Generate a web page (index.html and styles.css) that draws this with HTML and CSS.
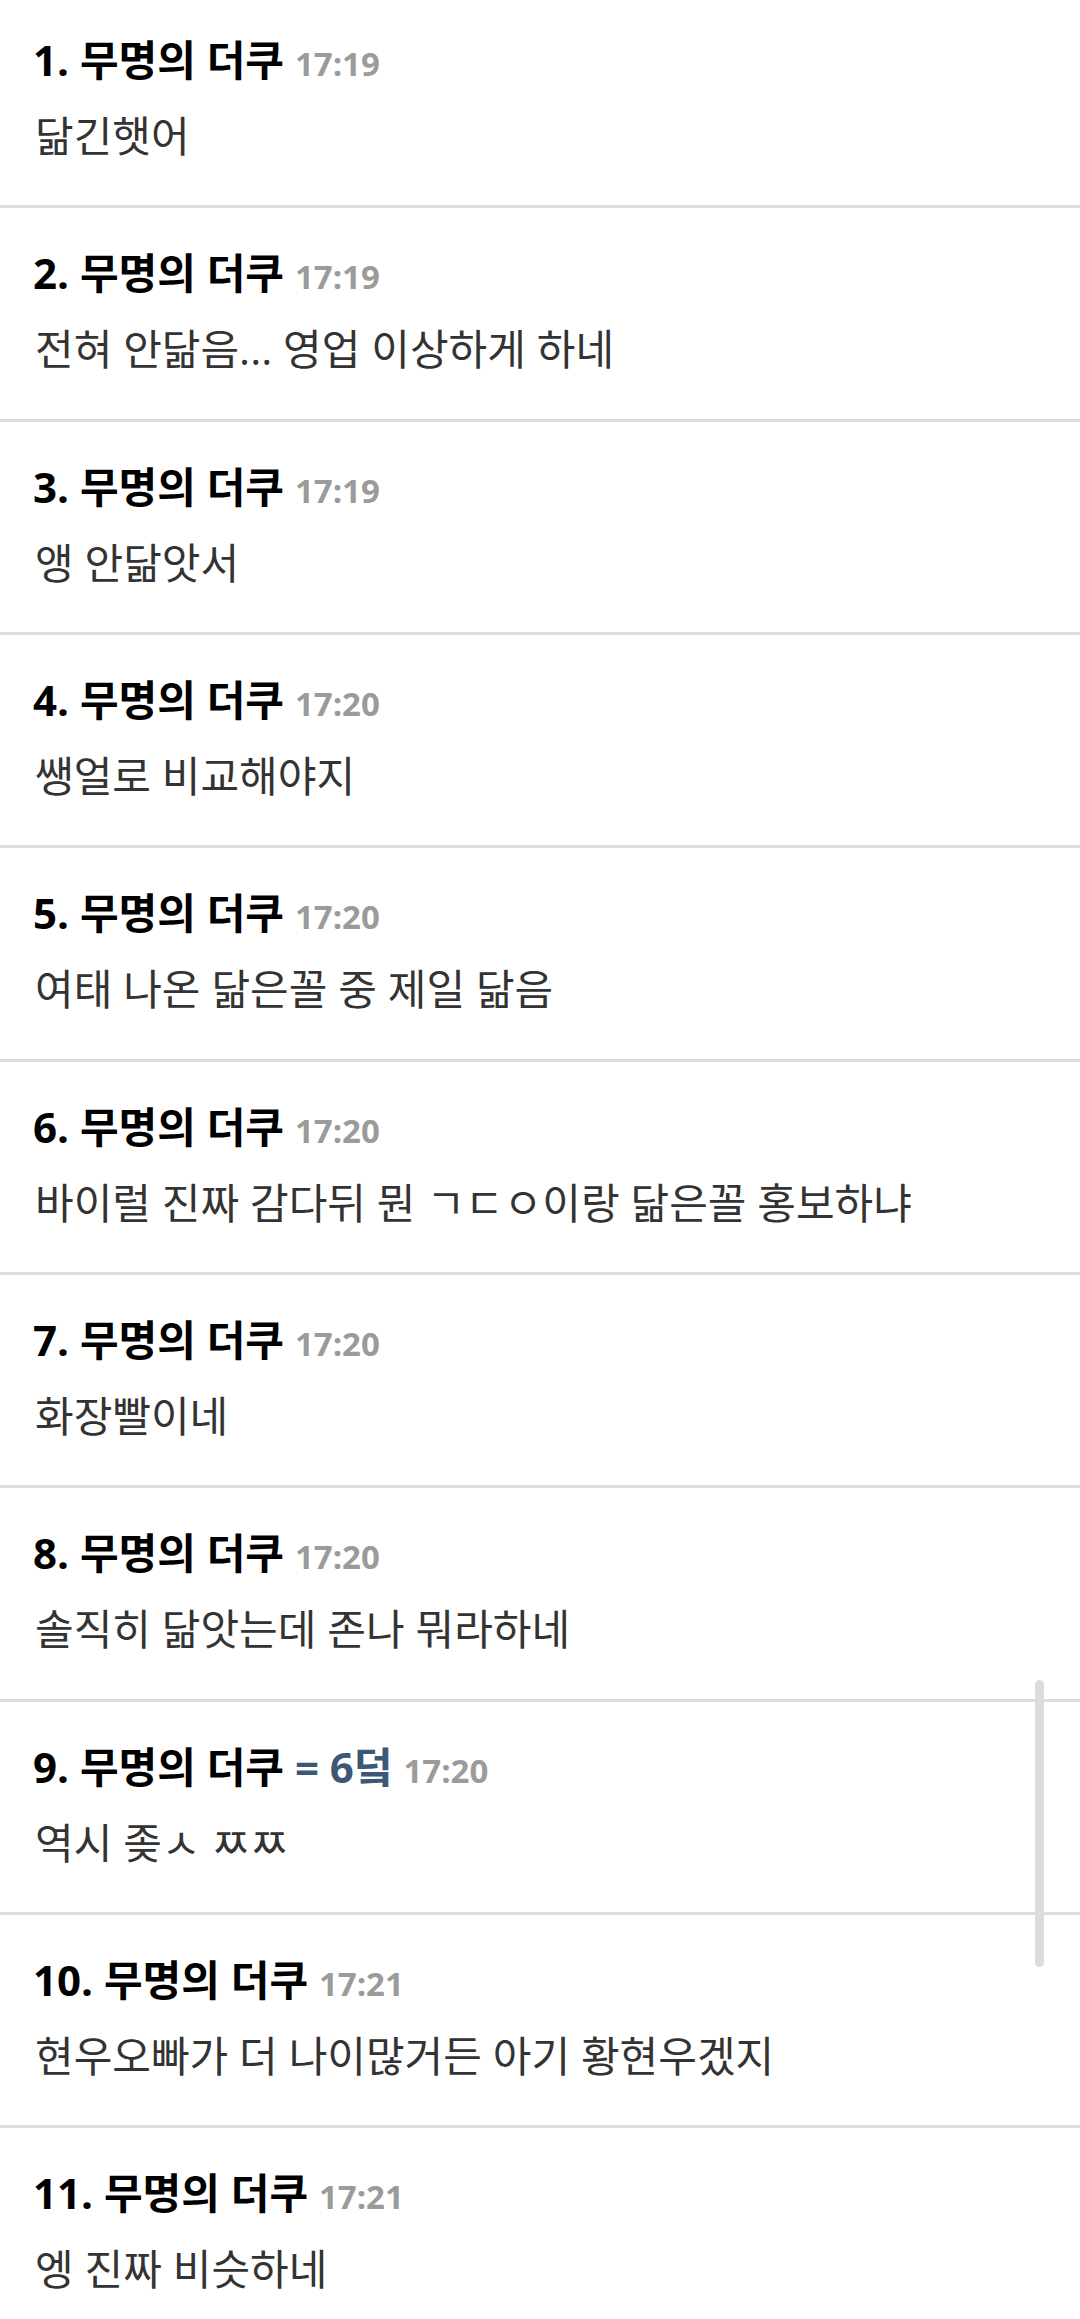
FILE: index.html
```html
<!DOCTYPE html>
<html lang="ko">
<head>
<meta charset="utf-8">
<link rel="stylesheet" href="styles.css">
</head>
<body>
<ul class="comments">
  <li class="comment"><div class="head">1. 무명의 더쿠 <span class="time">17:19</span></div><div class="body">닮긴햇어</div></li>
  <li class="comment"><div class="head">2. 무명의 더쿠 <span class="time">17:19</span></div><div class="body">전혀 안닮음... 영업 이상하게 하네</div></li>
  <li class="comment"><div class="head">3. 무명의 더쿠 <span class="time">17:19</span></div><div class="body">앵 안닮앗서</div></li>
  <li class="comment"><div class="head">4. 무명의 더쿠 <span class="time">17:20</span></div><div class="body">쌩얼로 비교해야지</div></li>
  <li class="comment"><div class="head">5. 무명의 더쿠 <span class="time">17:20</span></div><div class="body">여태 나온 닮은꼴 중 제일 닮음</div></li>
  <li class="comment"><div class="head">6. 무명의 더쿠 <span class="time">17:20</span></div><div class="body">바이럴 진짜 감다뒤 뭔 ㄱㄷㅇ이랑 닮은꼴 홍보하냐</div></li>
  <li class="comment"><div class="head">7. 무명의 더쿠 <span class="time">17:20</span></div><div class="body">화장빨이네</div></li>
  <li class="comment"><div class="head">8. 무명의 더쿠 <span class="time">17:20</span></div><div class="body">솔직히 닮앗는데 존나 뭐라하네</div></li>
  <li class="comment"><div class="head">9. 무명의 더쿠 <span class="ref">= 6덬</span> <span class="time">17:20</span></div><div class="body">역시 좆ㅅ ㅉㅉ</div></li>
  <li class="comment"><div class="head">10. 무명의 더쿠 <span class="time">17:21</span></div><div class="body">현우오빠가 더 나이많거든 아기 황현우겠지</div></li>
  <li class="comment"><div class="head">11. 무명의 더쿠 <span class="time">17:21</span></div><div class="body">엥 진짜 비슷하네</div></li>
</ul>
<div class="scrollbar"></div>
</body>
</html>
```
FILE: styles.css
```css
html, body {
  margin: 0;
  padding: 0;
  background: #ffffff;
  overflow: hidden;
}
body {
  width: 1080px;
  height: 2319px;
  font-family: "Open Sans", "Noto Sans CJK KR", sans-serif;
}
.comments {
  list-style: none;
  margin: -5px 0 0 0;
  padding: 0;
}
.comment {
  box-sizing: border-box;
  height: 213.33px;
  padding: 33px 33px 0 33px;
  border-bottom: 3px solid #dcdcdc;
  display: flex;
  flex-direction: column;
  gap: 8px;
}
.head {
  font-size: 42px;
  font-weight: 700;
  line-height: 64px;
  color: #000000;
  white-space: nowrap;
}
.time {
  font-size: 33px;
  font-weight: 700;
  color: #9b9b9b;
}
.ref {
  color: #3d5877;
}
.body {
  font-size: 42px;
  font-weight: 400;
  line-height: 64px;
  color: #333333;
  padding-left: 2px;
  white-space: nowrap;
}
.scrollbar {
  position: absolute;
  left: 1035px;
  top: 1680px;
  width: 9px;
  height: 287px;
  border-radius: 5px;
  background: #dcdcdc;
}
```
